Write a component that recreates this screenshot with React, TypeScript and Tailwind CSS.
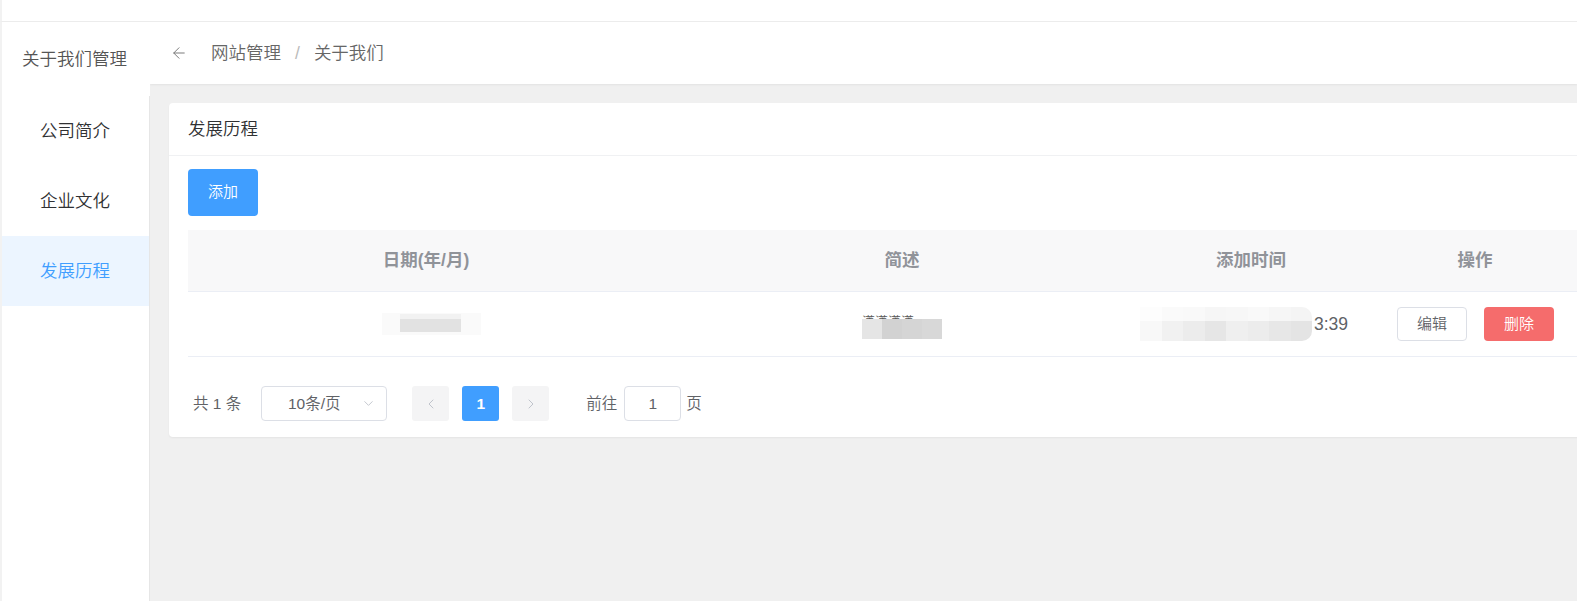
import { ArrowLeft, ChevronDown, ChevronLeft, ChevronRight } from "lucide-react";

const FONT = '"Liberation Sans", "Noto Sans CJK SC", sans-serif';

const menu = ["公司简介", "企业文化", "发展历程"];

function Mosaic({ cells, className }: { cells: string[]; className: string }) {
  return (
    <div className={`flex ${className}`}>
      {cells.map((c, i) => (
        <div key={i} className="h-full flex-1" style={{ background: c }} />
      ))}
    </div>
  );
}

export default function App() {
  return (
    <div
      className="flex h-[601px] w-full flex-col overflow-hidden bg-white font-[350] text-[#606266]"
      style={{ fontFamily: FONT }}
    >
      <div className="h-[22px] shrink-0 border-b border-[#ececec] border-l-2 border-l-[#f2f2f2] shadow-[0_1px_2px_rgba(0,0,0,0.04)]" />
      <div className="flex min-h-0 flex-1">
        {/* sidebar */}
        <aside className="flex w-[150px] shrink-0 flex-col border-l-2 border-[#f2f2f2] bg-white">
          <div className="flex h-[74px] items-center pl-[20px] text-[17.5px] text-[#555]">关于我们管理</div>
          <div className="flex flex-1 flex-col border-r border-[#e6e6e6]">
            {menu.map((m) => (
              <div
                key={m}
                className={
                  m === "发展历程"
                    ? "flex h-[70px] items-center bg-[#ecf5ff] pl-[38px] text-[17.5px] text-[#409eff]"
                    : "flex h-[70px] items-center pl-[38px] text-[17.5px] text-[#303133]"
                }
              >
                {m}
              </div>
            ))}
          </div>
        </aside>

        {/* main */}
        <main className="flex min-w-0 flex-1 flex-col overflow-hidden bg-[#f0f0f0]">
          <header className="flex h-[62px] shrink-0 items-center bg-white pl-[20px] text-[17.5px] text-[#666] shadow-[0_1px_2px_rgba(0,0,0,0.06)]">
            <ArrowLeft className="h-[18px] w-[18px] text-[#777]" strokeWidth={1.3} />
            <span className="ml-[23px]">网站管理</span>
            <span className="mx-[14px] text-[#bbb]">/</span>
            <span>关于我们</span>
          </header>

          <div className="pl-[19px] pt-[19px]">
            <section className="w-[1438px] rounded-[4px] bg-white shadow-[0_1px_2px_rgba(0,0,0,0.05)]">
              <div className="flex h-[53px] items-center border-b border-[#f0f1f3] pl-[19px] text-[17.5px] text-[#303133]">
                发展历程
              </div>
              <div className="px-[19px] pb-[16px] pt-[13px]">
                <button className="h-[47px] w-[70px] rounded-[4px] bg-[#409eff] text-[15px] text-white">添加</button>

                {/* table */}
                <div className="mt-[14px]">
                  <div className="grid h-[62px] grid-cols-[476px_476px_222px_1fr] items-center border-b border-[#ebeef5] bg-[#f8f8f9] text-[17.5px] font-bold text-[#909399]">
                    <div className="text-center">日期(年/月)</div>
                    <div className="text-center">简述</div>
                    <div className="text-center">添加时间</div>
                    <div className="text-center">操作</div>
                  </div>
                  <div className="grid h-[65px] grid-cols-[476px_476px_222px_1fr] items-center border-b border-[#ebeef5] text-[17.5px]">
                    <div className="flex justify-center">
                      <div className="ml-[10px] flex h-[22px] w-[99px] items-start bg-[#fafafa]">
                        <div className="ml-[18px] mt-[1px] flex h-[18px] w-[61px] flex-col">
                          <div className="h-[5px] bg-[#f2f2f2]" />
                          <div className="flex-1 bg-[#e2e2e2]" />
                        </div>
                      </div>
                    </div>
                    <div className="flex justify-center">
                      <div className="mt-[4px] flex h-[26px] w-[80px] flex-col">
                        <div className="h-[6px] overflow-hidden text-[13px] leading-[18px] text-[#555]">潇潇潇潇</div>
                        <Mosaic cells={["#e5e5e5", "#d2d2d2", "#d5d5d5", "#d8d8d8"]} className="flex-1" />
                      </div>
                    </div>
                    <div className="flex items-center justify-end pr-[14px]">
                      <div className="mr-[-100px] flex h-[34px] w-[178px] flex-col overflow-hidden rounded-r-[10px]">
                        <Mosaic cells={["#fdfdfd", "#fafafa", "#f9f9f9", "#f6f6f6", "#f7f7f7", "#f9f9f9", "#f6f6f6", "#f4f4f4"]} className="h-[14px]" />
                        <Mosaic cells={["#f8f8f8", "#f1f1f1", "#ececec", "#e6e6e6", "#efefef", "#ececec", "#e7e7e7", "#e4e4e4"]} className="flex-1" />
                      </div>
                      <span className="relative ml-[102px] text-[17.5px] text-[#606266]">3:39</span>
                    </div>
                    <div className="flex items-center gap-[17px] pl-[35px]">
                      <button className="h-[34px] w-[70px] rounded-[4px] border border-[#dcdfe6] bg-white text-[15px] text-[#606266]">编辑</button>
                      <button className="h-[34px] w-[70px] rounded-[4px] bg-[#f56c6c] text-[15px] text-white">删除</button>
                    </div>
                  </div>
                </div>

                {/* pagination */}
                <div className="mt-[29px] flex h-[35px] items-center pl-[5px] text-[15.5px] text-[#606266]">
                  <span>共 1 条</span>
                  <div className="relative ml-[20px] flex h-[35px] w-[126px] items-center justify-center rounded-[4px] border border-[#dcdfe6] pr-[20px]">
                    10条/页
                    <ChevronDown className="absolute right-[10px] h-[15px] w-[15px] text-[#c0c4cc]" strokeWidth={1.5} />
                  </div>
                  <div className="ml-[25px] flex h-[35px] w-[37px] items-center justify-center rounded-[3px] bg-[#f4f4f5]">
                    <ChevronLeft className="h-[16px] w-[16px] text-[#c0c4cc]" strokeWidth={1.5} />
                  </div>
                  <div className="ml-[13px] flex h-[35px] w-[37px] items-center justify-center rounded-[3px] bg-[#409eff] font-bold text-white">
                    1
                  </div>
                  <div className="ml-[13px] flex h-[35px] w-[37px] items-center justify-center rounded-[3px] bg-[#f4f4f5]">
                    <ChevronRight className="h-[16px] w-[16px] text-[#c0c4cc]" strokeWidth={1.5} />
                  </div>
                  <span className="ml-[37px]">前往</span>
                  <div className="ml-[7px] flex h-[35px] w-[57px] items-center justify-center rounded-[4px] border border-[#dcdfe6]">1</div>
                  <span className="ml-[5px]">页</span>
                </div>
              </div>
            </section>
          </div>
        </main>
      </div>
    </div>
  );
}
